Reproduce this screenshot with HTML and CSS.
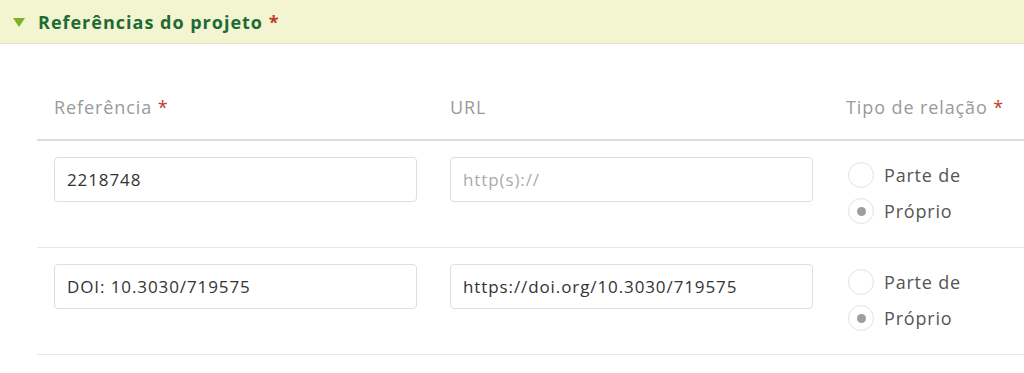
FILE: index.html
```html
<!DOCTYPE html>
<html>
<head>
  <meta charset="utf-8" />
  <title>Referências do projeto</title>
  <link rel="stylesheet" href="styles.css">
</head>
<body>
  <div class="section-head">
    <span class="caret"></span>
    <h2>Referências do projeto <span class="req">*</span></h2>
  </div>

  <div class="section-body">
    <table class="refs">
      <thead>
        <tr>
          <th class="col-ref">Referência <span class="req">*</span></th>
          <th class="col-url">URL</th>
          <th>Tipo de relação <span class="req">*</span></th>
        </tr>
      </thead>
      <tbody>
        <tr>
          <td><input type="text" class="field" value="2218748" /></td>
          <td><input type="text" class="field" placeholder="http(s)://" /></td>
          <td>
            <label class="radio"><span class="dot"></span>Parte de</label>
            <label class="radio checked"><span class="dot"></span>Próprio</label>
          </td>
        </tr>
        <tr>
          <td><input type="text" class="field" value="DOI: 10.3030/719575" /></td>
          <td><input type="text" class="field" value="https://doi.org/10.3030/719575" /></td>
          <td>
            <label class="radio"><span class="dot"></span>Parte de</label>
            <label class="radio checked"><span class="dot"></span>Próprio</label>
          </td>
        </tr>
      </tbody>
    </table>
  </div>
</body>
</html>
```

FILE: styles.css
```css
body {
  margin: 0;
  font-family: "Open Sans", Arial, sans-serif;
  background-color: #fff;
  color: #333;
  overflow: hidden;
}

.section-head {
  display: flex;
  align-items: center;
  height: 43px;
  padding-left: 13px;
  background-color: #f3f4d0;
  border-bottom: 1px solid #e4e5c6;
}

.caret {
  width: 0;
  height: 0;
  border-left: 6px solid transparent;
  border-right: 6px solid transparent;
  border-top: 9px solid #7bb32a;
  margin-right: 13px;
  margin-top: 1px;
}

.section-head h2 {
  margin: 0;
  font-size: 18px;
  font-weight: 700;
  letter-spacing: 1px;
  color: #1d6a35;
}

.req {
  color: #c0392b;
  letter-spacing: 0;
}

.section-body {
  padding: 27px 0 0 37px;
}

.refs {
  border-collapse: collapse;
  width: 1100px;
}

.refs th {
  text-align: left;
  font-weight: 400;
  font-size: 18px;
  letter-spacing: 0.9px;
  line-height: 24px;
  color: #9a9a9a;
  padding: 24px 16px 20px 17px;
  border-bottom: 2px solid #dcdcdc;
}

.refs .col-ref,
.refs .col-url {
  width: 363px;
}

.refs td {
  vertical-align: top;
  padding: 16px 16px 18px 17px;
  border-bottom: 1px solid #e6e6e6;
}

.field {
  box-sizing: border-box;
  width: 363px;
  height: 45px;
  padding: 0 12px;
  border: 1px solid #dedede;
  border-radius: 4px;
  font-family: "Open Sans", Arial, sans-serif;
  font-size: 17px;
  letter-spacing: 0.9px;
  color: #333;
}

.field::placeholder {
  color: #aaa;
}

.radio {
  display: flex;
  align-items: center;
  height: 36px;
  font-size: 18px;
  letter-spacing: 0.8px;
  color: #555;
}

.radio .dot {
  box-sizing: border-box;
  width: 26px;
  height: 26px;
  margin: 0 10px 0 2px;
  border: 1px solid #e2e2e2;
  border-radius: 50%;
  display: flex;
  align-items: center;
  justify-content: center;
}

.radio.checked .dot::after {
  content: "";
  width: 9px;
  height: 9px;
  border-radius: 50%;
  background-color: #9e9e9e;
}
```
